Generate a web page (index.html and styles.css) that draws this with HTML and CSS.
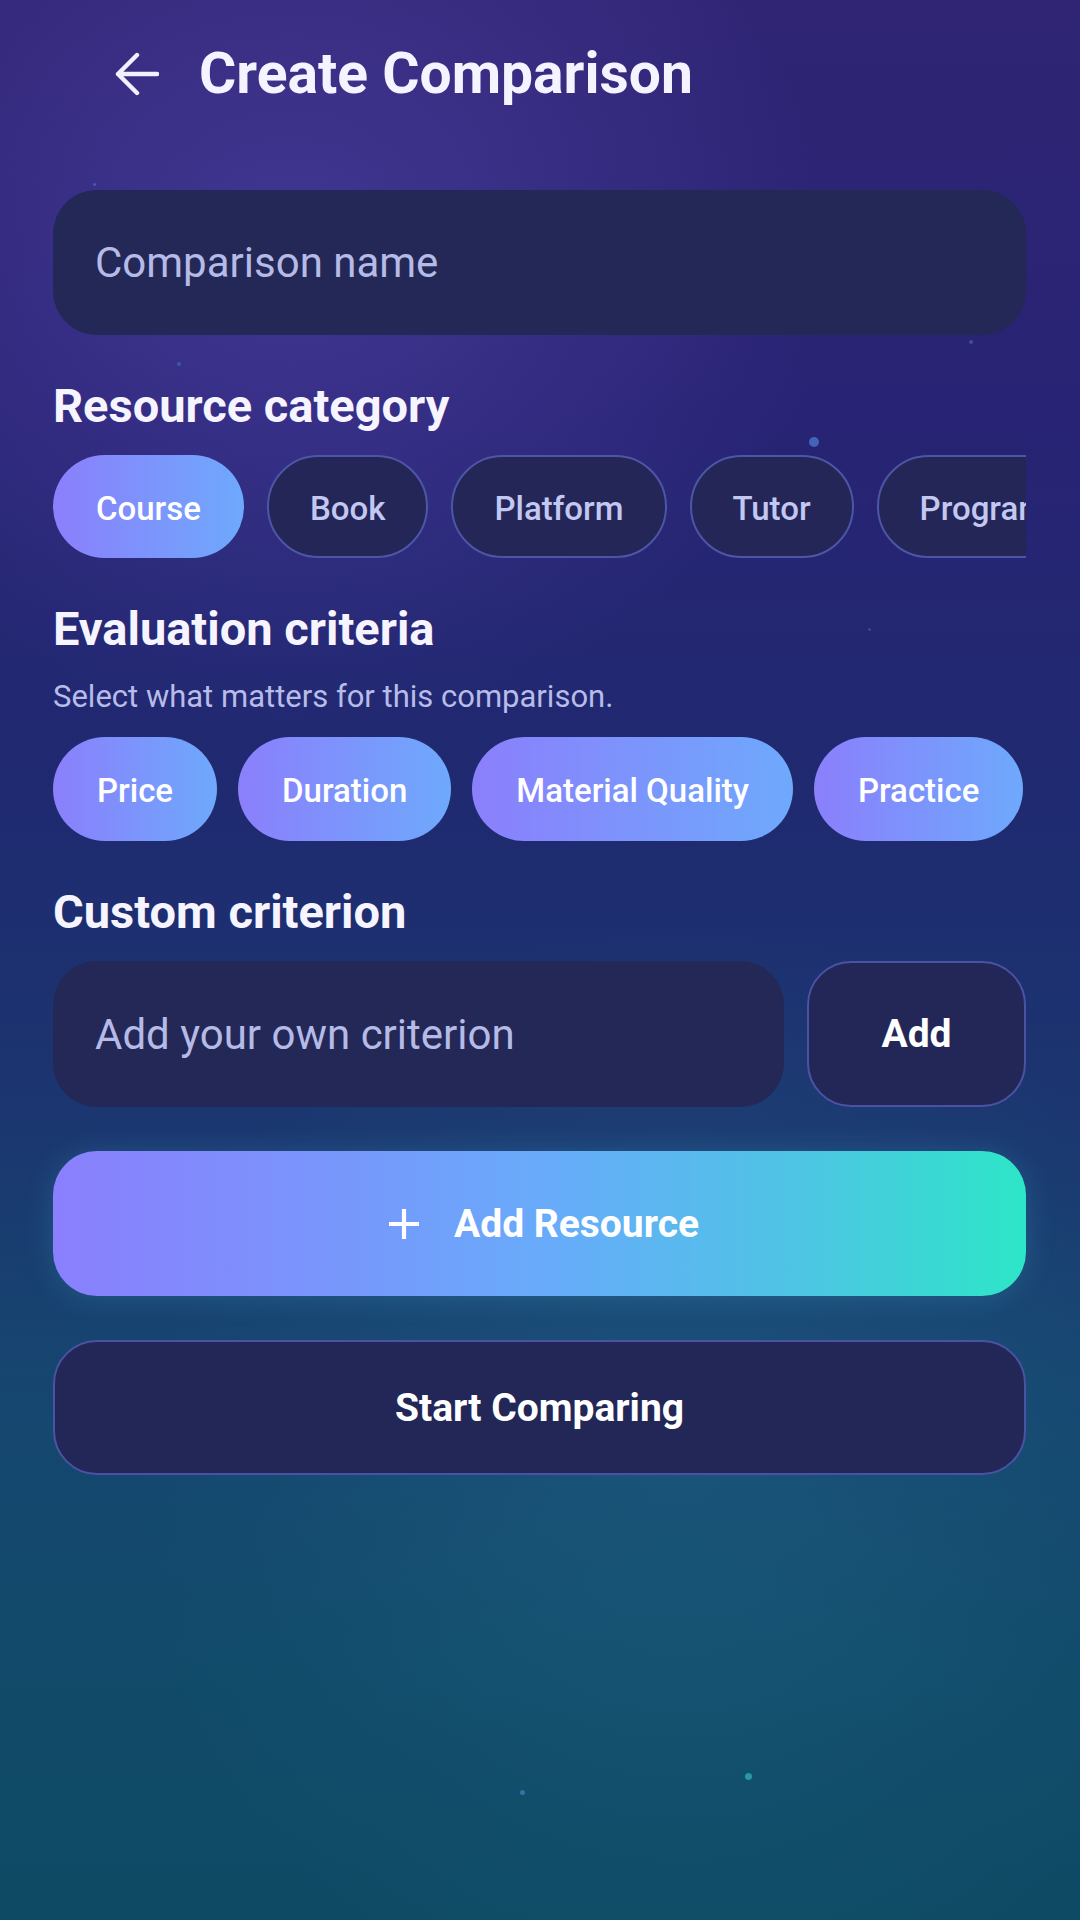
FILE: index.html
```html
<!DOCTYPE html>
<html lang="en">
<head>
<meta charset="utf-8">
<title>Create Comparison</title>
<link rel="stylesheet" href="styles.css">
</head>
<body>
<div class="screen">
  <span class="dot d1"></span><span class="dot d2"></span><span class="dot d3"></span>
  <span class="dot d4"></span><span class="dot d5"></span><span class="dot d6"></span>
  <span class="dot d7"></span>
  <main class="content">
    <header class="topbar">
      <svg class="back" viewBox="0 0 44 44" width="44" height="44" aria-hidden="true">
        <path d="M42 22H3M22 3L3 22l19 19" fill="none" stroke="#f1f0ff" stroke-width="4.4" stroke-linecap="round" stroke-linejoin="round"/>
      </svg>
      <h1 class="title">Create Comparison</h1>
    </header>

    <div class="field name-field">Comparison name</div>

    <h2 class="label first-label">Resource category</h2>
    <div class="chip-row">
      <span class="chip selected">Course</span>
      <span class="chip">Book</span>
      <span class="chip">Platform</span>
      <span class="chip">Tutor</span>
      <span class="chip">Program</span>
    </div>

    <h2 class="label">Evaluation criteria</h2>
    <p class="hint">Select what matters for this comparison.</p>
    <div class="chip-row criteria">
      <span class="chip selected">Price</span>
      <span class="chip selected">Duration</span>
      <span class="chip selected">Material Quality</span>
      <span class="chip selected">Practice</span>
    </div>

    <h2 class="label">Custom criterion</h2>
    <div class="custom-row">
      <div class="field custom-field">Add your own criterion</div>
      <button class="add-btn">Add</button>
    </div>

    <button class="primary">
      <svg class="plus" viewBox="0 0 32 32" width="32" height="32" aria-hidden="true">
        <path d="M16 1v30M1 16h30" fill="none" stroke="#ffffff" stroke-width="4.2"/>
      </svg>
      <span>Add Resource</span>
    </button>

    <button class="secondary">Start Comparing</button>
  </main>
</div>
</body>
</html>
```

FILE: styles.css
```css
* { box-sizing: border-box; }

html, body {
  margin: 0;
  padding: 0;
  width: 1080px;
  height: 1920px;
  overflow: hidden;
}

body {
  font-family: Roboto, "Noto Sans", "Liberation Sans", sans-serif;
  color: #ffffff;
}

.screen {
  position: relative;
  width: 1080px;
  height: 1920px;
  overflow: hidden;
  background:
    radial-gradient(ellipse 540px 480px at 290px 250px, rgba(92, 78, 182, 0.45), rgba(92, 78, 182, 0) 100%),
    radial-gradient(ellipse 540px 560px at 680px 1480px, rgba(40, 120, 150, 0.26), rgba(40, 120, 150, 0) 100%),
    linear-gradient(180deg, #302575 0%, #282374 22%, #1f2a70 42%, #1b3670 58%, #164670 72%, #114a6a 86%, #0e4a64 100%);
}

.content {
  position: relative;
  display: flex;
  flex-direction: column;
  padding: 0 54px 0 53px;
}

.topbar {
  height: 148px;
  display: flex;
  align-items: center;
  gap: 40px;
  padding-left: 62px;
}

.back { flex: none; display: block; }

.title {
  margin: 0;
  font-size: 57px;
  font-weight: 700;
  line-height: 64px;
  color: #f4f3ff;
  letter-spacing: 0;
}

.field {
  height: 145px;
  border-radius: 44px;
  background: #232857;
  display: flex;
  align-items: center;
  padding-left: 42px;
  font-size: 42px;
  color: #b5bae6;
}

.name-field { margin-top: 42px; }

.label {
  margin: 43px 0 0;
  font-size: 47px;
  font-weight: 700;
  line-height: 56px;
  color: #f5f4ff;
}

.label.first-label { margin-top: 43px; }

.chip-row {
  margin-top: 21px;
  display: flex;
  gap: 23px;
  overflow: hidden;
  white-space: nowrap;
}

.chip {
  flex: none;
  height: 103px;
  padding: 3px 41px 0;
  border: 2px solid #4c56a6;
  border-radius: 52px;
  background: #232656;
  display: flex;
  align-items: center;
  font-size: 33px;
  font-weight: 500;
  color: #c3c8f2;
}

.chip.selected {
  border-color: transparent;
  background: linear-gradient(90deg, #8b7ffc 0%, #6ea9fc 100%);
  background-origin: border-box;
  color: #ffffff;
}

.hint {
  margin: 22px 0 0;
  font-size: 31px;
  line-height: 36px;
  color: #b7bce8;
}

.chip-row.criteria { margin-top: 22px; gap: 21px; }
.chip-row.criteria .chip { height: 104px; padding: 2px 42px 0; }

.custom-row {
  margin-top: 21px;
  display: flex;
  gap: 23px;
  height: 146px;
}

.custom-field { flex: 1; height: 146px; }

.add-btn {
  flex: none;
  width: 219px;
  height: 146px;
  border: 2.5px solid #4a52a4;
  border-radius: 44px;
  background: #232757;
  font-family: inherit;
  font-size: 39px;
  font-weight: 700;
  color: #ffffff;
  padding: 0;
}

.primary {
  margin-top: 44px;
  height: 145px;
  border: none;
  border-radius: 44px;
  background: linear-gradient(90deg, #8a7ffd 0%, #7b93fc 25%, #67acfa 52%, #4cc6e2 78%, #2de6c8 100%);
  box-shadow: 0 2px 30px rgba(80, 190, 225, 0.2);
  display: flex;
  align-items: center;
  justify-content: center;
  gap: 34px;
  font-family: inherit;
  font-size: 39px;
  font-weight: 700;
  color: #ffffff;
  padding: 0 0 0 8px;
}

.plus { display: block; flex: none; }

.secondary {
  margin-top: 44px;
  height: 135px;
  border: 2.5px solid #4a52a4;
  border-radius: 44px;
  background: #232757;
  font-family: inherit;
  font-size: 39px;
  font-weight: 700;
  color: #ffffff;
  padding: 0;
}

.dot {
  position: absolute;
  border-radius: 50%;
  background: #4a6ec2;
}
.d1 { left: 93px; top: 183px; width: 3px; height: 3px; opacity: 0.7; }
.d2 { left: 177px; top: 362px; width: 4px; height: 4px; opacity: 0.6; }
.d3 { left: 809px; top: 437px; width: 10px; height: 10px; opacity: 0.85; }
.d4 { left: 969px; top: 340px; width: 4px; height: 4px; opacity: 0.6; }
.d5 { left: 868px; top: 628px; width: 3px; height: 3px; opacity: 0.5; }
.d6 { left: 520px; top: 1790px; width: 5px; height: 5px; background: #3a7cb8; opacity: 0.8; }
.d7 { left: 745px; top: 1773px; width: 7px; height: 7px; background: #2aa0a6; opacity: 0.9; }
```
